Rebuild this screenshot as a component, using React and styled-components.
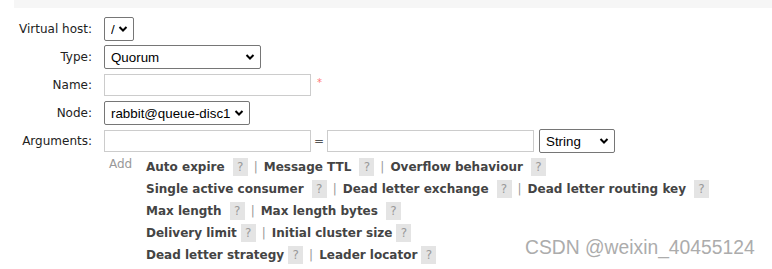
import React from "react";
import styled, { createGlobalStyle } from "styled-components";

const GlobalStyle = createGlobalStyle`
  html, body {
    margin: 0;
    padding: 0;
    background: #fff;
  }
  body {
    font-family: "DejaVu Sans", Verdana, sans-serif;
    font-size: 12px;
    color: #222;
  }
`;

// Help lines for the arguments row
const helpRows = [
  [
    { name: "Auto expire" },
    { name: "Message TTL" },
    { name: "Overflow behaviour" },
  ],
  [
    { name: "Single active consumer" },
    { name: "Dead letter exchange" },
    { name: "Dead letter routing key" },
  ],
  [{ name: "Max length" }, { name: "Max length bytes" }],
  [
    { name: "Delivery limit", tight: true },
    { name: "Initial cluster size", tight: true },
  ],
  [
    { name: "Dead letter strategy", tight: true },
    { name: "Leader locator", tight: true },
  ],
];

const Page = styled.div`
  position: relative;
  width: 772px;
  height: 269px;
  overflow: hidden;
`;

const TopBar = styled.div`
  margin-left: 14px;
  height: 8px;
  background: #f6f6f6;
`;

const Form = styled.div`
  display: grid;
  grid-template-columns: 92px auto;
  column-gap: 12px;
  grid-auto-rows: 28px;
  align-items: center;
  margin-top: 7px;
`;

const Label = styled.label`
  text-align: right;
  color: #222;
  white-space: nowrap;
`;

const Field = styled.div`
  display: flex;
  align-items: center;
`;

const SelectWrap = styled.div`
  position: relative;
  width: ${(p) => p.$width}px;
  height: 24px;
  flex: none;
`;

const Select = styled.select`
  appearance: none;
  width: 100%;
  height: 100%;
  box-sizing: border-box;
  border: 1px solid #767676;
  border-radius: 2px;
  background: #fff;
  padding: 0 0 0 6px;
  font-family: "Liberation Sans", Arial, sans-serif;
  font-size: 13.33px;
  color: #000;
  outline: none;
`;

const Chevron = styled.svg`
  position: absolute;
  right: 6px;
  top: 8px;
  width: 10px;
  height: 8px;
  pointer-events: none;
`;

const Input = styled.input`
  width: 207px;
  height: 22px;
  box-sizing: border-box;
  border: 1px solid #ccc;
  border-radius: 0;
  padding: 0 4px;
  margin: 0;
  font-family: "DejaVu Sans", Verdana, sans-serif;
  font-size: 12px;
  outline: none;
`;

const Mandatory = styled.span`
  color: #f77;
  font-size: 10px;
  margin-left: 6px;
  align-self: flex-start;
  margin-top: 3px;
`;

const Equals = styled.span`
  color: #555;
  width: 16px;
  text-align: center;
`;

const HelpArea = styled.div`
  display: flex;
  padding-left: 104px;
  margin-top: 1px;
`;

const AddLink = styled.span`
  width: 37px;
  padding-left: 5px;
  color: #999;
  line-height: 22px;
  margin-top: -3px;
  flex: none;
`;

const HelpLines = styled.div`
  display: flex;
  flex-direction: column;
`;

const HelpLine = styled.div`
  display: flex;
  align-items: center;
  height: 22px;
  white-space: nowrap;
`;

const ArgName = styled.span`
  font-weight: bold;
  color: #444;
`;

const HelpMark = styled.span`
  display: inline-block;
  width: 15px;
  height: 18px;
  line-height: 18px;
  text-align: center;
  background: #e4e4e4;
  color: #999;
  margin-left: ${(p) => (p.$tight ? 4 : 8)}px;
`;

const Sep = styled.span`
  color: #999;
  margin: 0 6px 0 6px;
`;

const Watermark = styled.div`
  position: absolute;
  left: 525px;
  top: 237px;
  font-family: "Liberation Sans", Arial, sans-serif;
  font-size: 19.3px;
  color: #acacac;
  white-space: nowrap;
`;

const Dropdown = ({ width, value }) => (
  <SelectWrap $width={width}>
    <Select defaultValue={value}>
      <option>{value}</option>
    </Select>
    <Chevron viewBox="0 0 10 8">
      <path d="M1.5 2 L5 5.5 L8.5 2" fill="none" stroke="#000" strokeWidth="2" />
    </Chevron>
  </SelectWrap>
);

const App = () => (
  <Page>
    <GlobalStyle />
    <TopBar />
    <Form>
      <Label>Virtual host:</Label>
      <Field>
        <Dropdown width={30} value="/" />
      </Field>

      <Label>Type:</Label>
      <Field>
        <Dropdown width={157} value="Quorum" />
      </Field>

      <Label>Name:</Label>
      <Field>
        <Input type="text" />
        <Mandatory>*</Mandatory>
      </Field>

      <Label>Node:</Label>
      <Field>
        <Dropdown width={146} value="rabbit@queue-disc1" />
      </Field>

      <Label>Arguments:</Label>
      <Field>
        <Input type="text" />
        <Equals>=</Equals>
        <Input type="text" />
        <span style={{ width: 5 }} />
        <Dropdown width={76} value="String" />
      </Field>
    </Form>

    <HelpArea>
      <AddLink>Add</AddLink>
      <HelpLines>
        {helpRows.map((row, i) => (
          <HelpLine key={i}>
            {row.map((arg, j) => (
              <React.Fragment key={arg.name}>
                {j > 0 && <Sep>|</Sep>}
                <ArgName>{arg.name}</ArgName>
                <HelpMark $tight={arg.tight}>?</HelpMark>
              </React.Fragment>
            ))}
          </HelpLine>
        ))}
      </HelpLines>
    </HelpArea>
    <Watermark>CSDN @weixin_40455124</Watermark>
  </Page>
);

export default App;
